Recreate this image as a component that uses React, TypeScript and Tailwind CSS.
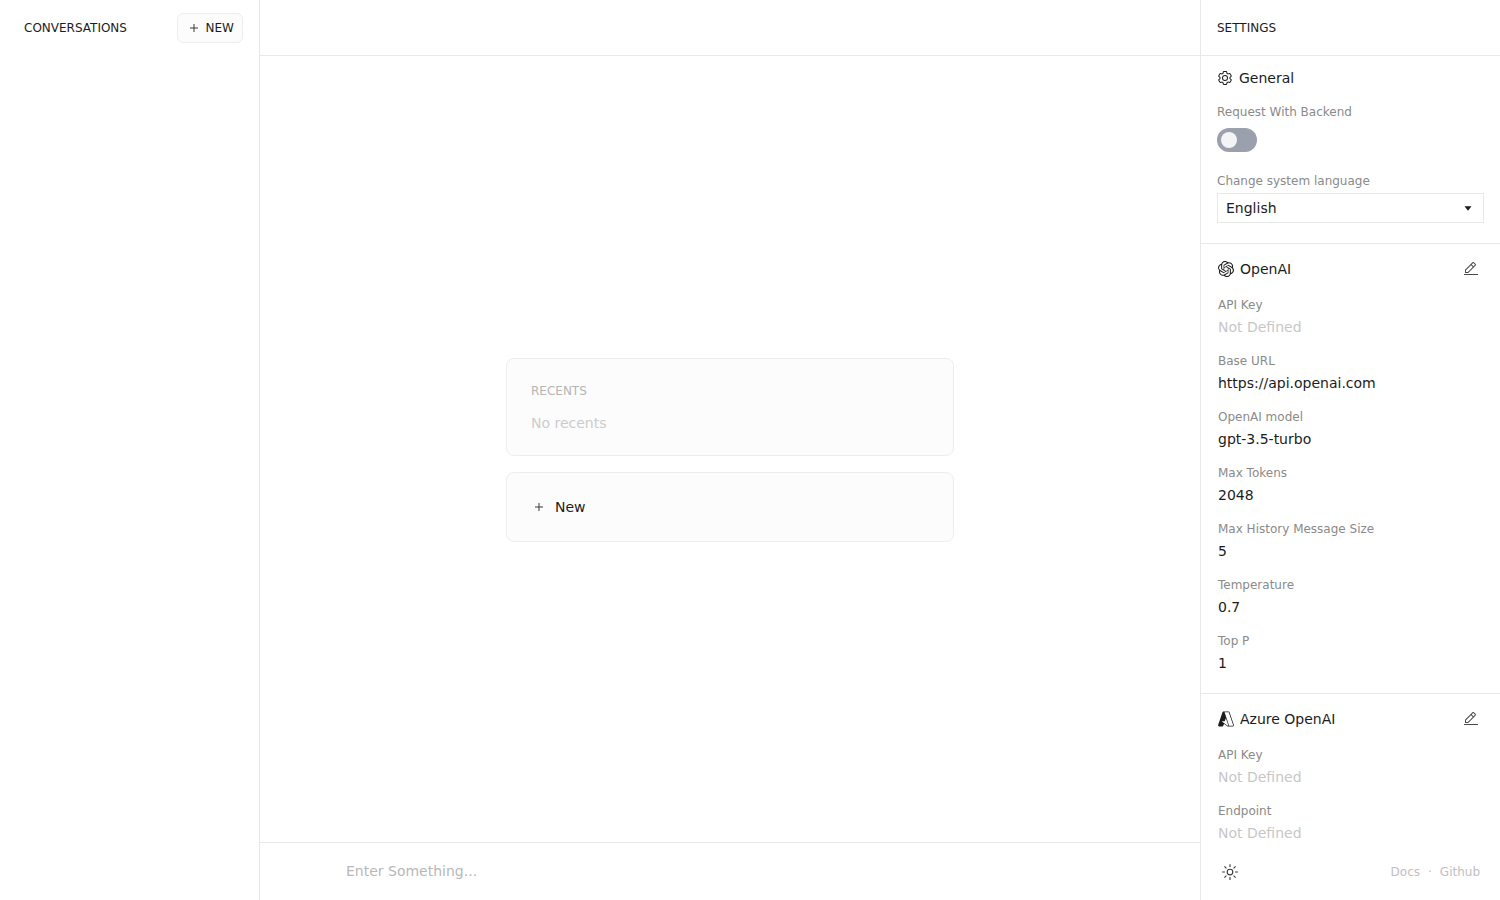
import { useState, type ReactNode } from 'react'
import { SiOpenai } from 'react-icons/si'
import { VscAzure } from 'react-icons/vsc'

interface Field {
  label: string
  value?: string
}

const openaiFields: Field[] = [
  { label: 'API Key' },
  { label: 'Base URL', value: 'https://api.openai.com' },
  { label: 'OpenAI model', value: 'gpt-3.5-turbo' },
  { label: 'Max Tokens', value: '2048' },
  { label: 'Max History Message Size', value: '5' },
  { label: 'Temperature', value: '0.7' },
  { label: 'Top P', value: '1' },
]

const azureFields: Field[] = [{ label: 'API Key' }, { label: 'Endpoint' }]

const icons = {
  add: 'M17 15V8h-2v7H8v2h7v7h2v-7h7v-2z',
  caret: 'M24 12L16 22L8 12z',
  edit: 'M2 26h28v2H2zM25.4 9c.8-.8.8-2 0-2.8l-3.6-3.6c-.8-.8-2-.8-2.8 0l-15 15V24h6.4zm-5-5L24 7.6l-3 3L17.4 7zM6 22v-3.6l10-10l3.6 3.6l-10 10z',
  sun: 'M16 12.005a4 4 0 1 1-4 4a4.005 4.005 0 0 1 4-4m0-2a6 6 0 1 0 6 6a6 6 0 0 0-6-6M5.394 6.813L6.81 5.399l3.505 3.506L8.9 10.319zM2 15.005h5v2H2zm3.394 10.193L8.9 21.692l1.414 1.414l-3.505 3.506zM15 25.005h2v5h-2zm6.687-1.9l1.414-1.414l3.506 3.506l-1.414 1.414zm3.313-8.1h5v2h-5zm-3.313-6.101l3.506-3.506l1.414 1.414l-3.506 3.506zM15 2.005h2v5h-2z',
  settings:
    'M27 16.76v-1.53l1.92-1.68A2 2 0 0 0 29.3 11l-2.36-4a2 2 0 0 0-1.73-1a2 2 0 0 0-.64.1l-2.43.82a11.35 11.35 0 0 0-1.31-.75l-.51-2.52a2 2 0 0 0-2-1.61h-4.68a2 2 0 0 0-2 1.61l-.51 2.52a11.48 11.48 0 0 0-1.32.75l-2.38-.86A2 2 0 0 0 6.79 6a2 2 0 0 0-1.73 1L2.7 11a2 2 0 0 0 .41 2.51L5 15.24v1.53l-1.89 1.68A2 2 0 0 0 2.7 21l2.36 4a2 2 0 0 0 1.73 1a2 2 0 0 0 .64-.1l2.43-.82a11.35 11.35 0 0 0 1.31.75l.51 2.52a2 2 0 0 0 2 1.61h4.72a2 2 0 0 0 2-1.61l.51-2.52a11.48 11.48 0 0 0 1.32-.75l2.42.82a2 2 0 0 0 .64.1a2 2 0 0 0 1.73-1l2.28-4a2 2 0 0 0-.41-2.51ZM25.21 24l-3.43-1.16a8.86 8.86 0 0 1-2.71 1.57L18.36 28h-4.72l-.71-3.55a9.36 9.36 0 0 1-2.7-1.57L6.79 24l-2.36-4l2.72-2.4a8.9 8.9 0 0 1 0-3.13L4.43 12l2.36-4l3.43 1.16a8.86 8.86 0 0 1 2.71-1.57L13.64 4h4.72l.71 3.55a9.36 9.36 0 0 1 2.7 1.57L25.21 8l2.36 4l-2.72 2.4a8.9 8.9 0 0 1 0 3.13L27.57 20ZM16 22a6 6 0 1 1 6-6a5.94 5.94 0 0 1-6 6m0-10a3.91 3.91 0 0 0-4 4a3.91 3.91 0 0 0 4 4a3.91 3.91 0 0 0 4-4a3.91 3.91 0 0 0-4-4',
}

const Icon = ({ name, className = 'size-4' }: { name: keyof typeof icons; className?: string }) => (
  <svg viewBox="0 0 32 32" fill="currentColor" className={`shrink-0 ${className}`} aria-hidden="true">
    <path d={icons[name]} />
  </svg>
)

interface ProviderProps {
  icon: ReactNode
  name: string
  fields: Field[]
  bordered?: boolean
}

const Provider = ({ icon, name, fields, bordered }: ProviderProps) => (
  <section className={`pl-[17px] pr-4 pt-3 pb-5 ${bordered ? 'border-b border-[#e8e8e8]' : ''}`}>
    <div className="flex items-center justify-between mb-[15px]">
      <h3 className="flex items-center gap-1.5 text-sm">
        {icon}
        {name}
      </h3>
      <button type="button" aria-label={`Edit ${name}`} className="p-[5px] text-[#4a4a4a]">
        <Icon name="edit" />
      </button>
    </div>
    <dl className="flex flex-col gap-4">
      {fields.map((field) => (
        <div key={field.label} className="flex flex-col gap-1">
          <dt className="text-xs text-[#8a8a8a]">{field.label}</dt>
          <dd className={`text-sm ${field.value ? '' : 'text-[#c7c7c7]'}`}>{field.value || 'Not Defined'}</dd>
        </div>
      ))}
    </dl>
  </section>
)

const Conversations = () => (
  <aside className="w-[260px] shrink-0 border-r border-[#e8e8e8]">
    <header className="h-14 flex items-center justify-between pl-6 pr-4">
      <h2 className="text-xs uppercase">Conversations</h2>
      <button
        type="button"
        className="h-[30px] px-2 flex items-center gap-1 rounded-md border border-[#ededed] bg-[#fcfcfc] text-xs uppercase"
      >
        <Icon name="add" className="size-4 text-[#3a3a3a]" />
        New
      </button>
    </header>
  </aside>
)

const Chat = () => {
  const [message, setMessage] = useState('')

  return (
    <main className="flex-1 min-w-0 flex flex-col">
      <div className="h-14 shrink-0 border-b border-[#e8e8e8]" />
      <div className="flex-1 flex flex-col items-center justify-center gap-4 px-4 pt-0.5">
        <section className="w-full max-w-md rounded-lg border border-[#ededed] bg-[#fcfcfc] px-6 pt-6 pb-[22px]">
          <h3 className="text-xs uppercase text-[#b5b5b5] mb-3.5">Recents</h3>
          <p className="text-sm text-[#cccccc]">No recents</p>
        </section>
        <button
          type="button"
          className="w-full max-w-md rounded-lg border border-[#ededed] bg-[#fcfcfc] p-6 flex items-center gap-2 text-sm"
        >
          <Icon name="add" className="size-4 text-[#3a3a3a]" />
          New
        </button>
      </div>
      <div className="border-t border-[#e8e8e8]">
        <textarea
          rows={1}
          aria-label="Message"
          placeholder="Enter Something..."
          value={message}
          onChange={(e) => setMessage(e.target.value)}
          className="block w-full max-w-3xl h-[57px] mx-auto py-[18px] text-sm bg-transparent resize-none outline-none placeholder:text-[#b8b8b8]"
        />
      </div>
    </main>
  )
}

const Settings = () => {
  const [backend, setBackend] = useState(false)
  const [language, setLanguage] = useState('en')

  return (
    <aside className="w-[300px] shrink-0 flex flex-col border-l border-[#e8e8e8]">
      <header className="h-14 shrink-0 flex items-center px-4 border-b border-[#e8e8e8]">
        <h2 className="text-xs uppercase">Settings</h2>
      </header>

      <div className="flex-1 min-h-0 overflow-y-auto [scrollbar-width:none]">
        <section className="px-4 pt-3 pb-5 border-b border-[#e8e8e8]">
          <h3 className="flex items-center gap-1.5 text-sm mb-4">
            <Icon name="settings" />
            General
          </h3>
          <label htmlFor="backend" className="block text-xs text-[#8a8a8a] mb-2">
            Request With Backend
          </label>
          <input
            id="backend"
            type="checkbox"
            role="switch"
            checked={backend}
            onChange={(e) => setBackend(e.target.checked)}
            className="appearance-none block w-10 h-6 p-1 rounded-full bg-[#9aa0ac] checked:bg-emerald-600 before:block before:size-4 before:rounded-full before:bg-[#f3f4f6] checked:before:translate-x-4 before:transition-transform"
          />
          <label htmlFor="language" className="block text-xs text-[#8a8a8a] mt-[21px] mb-1">
            Change system language
          </label>
          <div className="relative">
            <select
              id="language"
              value={language}
              onChange={(e) => setLanguage(e.target.value)}
              className="appearance-none block w-full h-[30px] px-2 text-sm border border-[#e8e8e8] outline-none"
            >
              <option value="en">English</option>
              <option value="zh">简体中文</option>
            </select>
            <Icon name="caret" className="size-3.5 absolute right-[9px] top-2 pointer-events-none" />
          </div>
        </section>

        <Provider icon={<SiOpenai size={16} />} name="OpenAI" fields={openaiFields} bordered />
        <Provider icon={<VscAzure size={16} viewBox="0.5 0.5 15 15" />} name="Azure OpenAI" fields={azureFields} />
      </div>

      <footer className="h-14 shrink-0 flex items-center justify-between pl-4 pr-5">
        <button type="button" aria-label="Toggle theme" className="p-1 text-[#3a3a3a]">
          <Icon name="sun" className="size-[18px]" />
        </button>
        <nav className="flex gap-2 text-xs text-[#c0c0c0]">
          <a href="#docs">Docs</a>
          <span>·</span>
          <a href="#github">Github</a>
        </nav>
      </footer>
    </aside>
  )
}

const App = () => (
  <div className="h-screen flex bg-white text-[#1c1c1c] font-['DejaVu_Sans',sans-serif]">
    <Conversations />
    <Chat />
    <Settings />
  </div>
)

export default App
